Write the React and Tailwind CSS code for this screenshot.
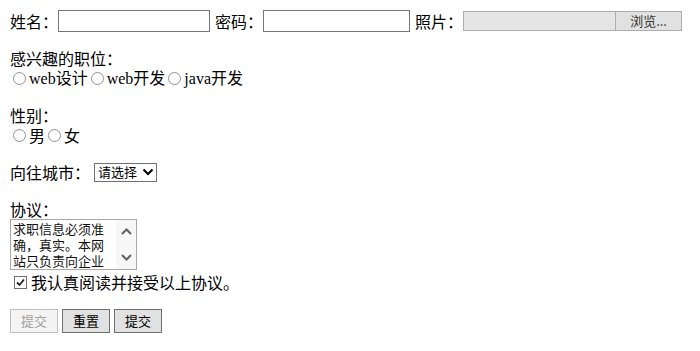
import { useState } from 'react'

const font = "font-['Liberation_Serif','Noto_Sans_CJK_SC',serif]"
const cjk = "font-['Noto_Sans_CJK_SC',sans-serif]"

function Radio({ name, label }) {
  return (
    <label className="inline-flex items-center">
      <input
        type="radio"
        name={name}
        className="appearance-none w-[13px] h-[13px] rounded-full border border-[#8f8f8f] bg-white mx-[3px] mt-[1px]"
      />
      <span>{label}</span>
    </label>
  )
}

function Btn({ children, disabled }) {
  return (
    <button
      disabled={disabled}
      className={`h-[24px] w-[48px] border text-[13px] ${cjk} ${
        disabled
          ? 'border-[#bfbfbf] bg-[#f4f4f4] text-[#a0a0a0]'
          : 'border-[#707070] bg-[#e1e1e1] text-black'
      }`}
    >
      {children}
    </button>
  )
}

export default function App() {
  const [agree, setAgree] = useState(true)

  return (
    <div className={`bg-white text-black text-[16px] leading-5 px-[10px] pt-[10px] w-[700px] h-[351px] ${font}`}>

      {/* first line */}
      <div className="flex items-center h-[22px]">
        <span className={cjk}>姓名：</span>
        <input type="text" className="w-[152px] h-[22px] border border-[#767676] outline-none" />
        <span className={`ml-[5px] ${cjk}`}>密码：</span>
        <input type="password" className="w-[147px] h-[22px] border border-[#767676] outline-none" />
        <span className={`ml-[5px] ${cjk}`}>照片：</span>
        <div className="flex h-[20px] w-[219px] border border-[#adadad] bg-[#e5e5e5]">
          <div className="flex-1" />
          <div className={`w-[66px] border-l border-[#adadad] bg-[#e1e1e1] text-[13px] flex items-center justify-center text-[#333] ${cjk}`}>
            浏览...
          </div>
        </div>
      </div>

      {/* positions */}
      <div className="mt-[16px]">
        <div className={cjk}>感兴趣的职位：</div>
        <div className="flex items-center h-5">
          <Radio name="job" label={<>web<span className={cjk}>设计</span></>} />
          <Radio name="job" label={<>web<span className={cjk}>开发</span></>} />
          <Radio name="job" label={<>java<span className={cjk}>开发</span></>} />
        </div>
      </div>

      {/* gender */}
      <div className="mt-[17px]">
        <div className={cjk}>性别：</div>
        <div className={`flex items-center h-5 ${cjk}`}>
          <Radio name="sex" label="男" />
          <Radio name="sex" label="女" />
        </div>
      </div>

      {/* city */}
      <div className="mt-[17px] flex items-center h-5">
        <span className={cjk}>向往城市：</span>
        <div className="ml-[4px] inline-flex items-center h-[19px] border border-[#707070] bg-white pl-[3px] pr-[2px]">
          <select className={`appearance-none bg-transparent text-[13px] outline-none ${cjk}`}>
            <option>请选择</option>
            <option>北京</option>
            <option>上海</option>
          </select>
          <svg width="12" height="10" viewBox="0 0 12 10" className="ml-[4px]">
            <path d="M1.5 2.5 L6 7 L10.5 2.5" fill="none" stroke="#000" strokeWidth="2" />
          </svg>
        </div>
      </div>

      {/* agreement */}
      <div className="mt-[17px]">
        <div className={cjk}>协议：</div>
        <div className="flex w-[127px] h-[51px] border border-[#a9a9a9] bg-white">
          <textarea
            readOnly
            value="求职信息必须准确，真实。本网站只负责向企业提供求职者信息，不对信息真实性负责。"
            className={`w-[105px] h-full text-[13px] leading-[16px] pl-[2px] pt-[1px] resize-none overflow-hidden outline-none text-[#111] ${cjk}`}
          />
          <div className="flex-1 flex flex-col items-center justify-between py-[8px] bg-[#f7f7f7]">
            <svg width="11" height="7" viewBox="0 0 11 7">
              <path d="M1 6 L5.5 1.5 L10 6" fill="none" stroke="#606060" strokeWidth="2" />
            </svg>
            <svg width="11" height="7" viewBox="0 0 11 7">
              <path d="M1 1 L5.5 5.5 L10 1" fill="none" stroke="#606060" strokeWidth="2" />
            </svg>
          </div>
        </div>
        <label className={`flex items-center h-5 mt-[2px] ${cjk}`}>
          <span className="relative w-[13px] h-[13px] mx-[4px]">
            <input
              type="checkbox"
              checked={agree}
              onChange={(e) => setAgree(e.target.checked)}
              className="appearance-none block w-[13px] h-[13px] border border-[#707070] bg-white"
            />
            {agree && (
              <svg width="13" height="13" viewBox="0 0 13 13" className="absolute left-0 top-0 pointer-events-none">
                <path d="M3 6.5 L5.5 9 L10 3.5" fill="none" stroke="#222" strokeWidth="1.8" />
              </svg>
            )}
          </span>
          我认真阅读并接受以上协议。
        </label>
      </div>

      {/* buttons */}
      <div className="mt-[17px] flex gap-[4px]">
        <Btn disabled>提交</Btn>
        <Btn>重置</Btn>
        <Btn>提交</Btn>
      </div>
    </div>
  )
}
